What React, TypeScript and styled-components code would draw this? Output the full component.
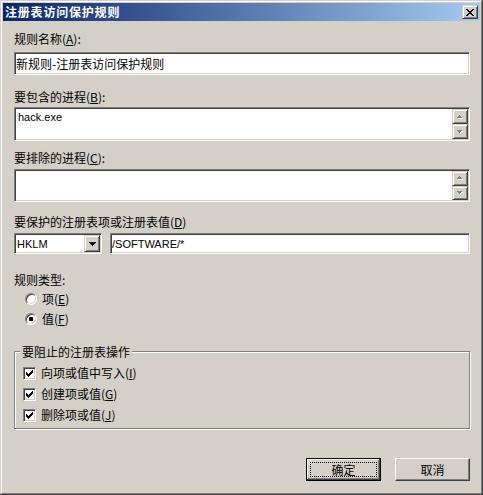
import React from "react";
import styled, { createGlobalStyle, css } from "styled-components";

const FACE = "#d4d0c8";

const GlobalStyle = createGlobalStyle`
  html, body { margin: 0; padding: 0; background: ${FACE}; }
  body {
    font-family: "Noto Sans CJK SC", "Liberation Sans", sans-serif;
    font-size: 12px;
    color: #000;
  }
  * { box-sizing: border-box; }
`;

const sunken = css`
  background: #fff;
  border: 1px solid;
  border-color: #808080 #fff #fff #808080;
  box-shadow: inset 1px 1px 0 #404040, inset -1px -1px 0 ${FACE};
`;

const raisedSmall = css`
  background: ${FACE};
  border: 1px solid;
  border-color: ${FACE} #404040 #404040 ${FACE};
  box-shadow: inset 1px 1px 0 #fff, inset -1px -1px 0 #808080;
`;

const Window = styled.div`
  width: 483px;
  height: 495px;
  padding: 3px;
  background: ${FACE};
  display: flex;
  flex-direction: column;
  box-shadow: inset -1px -1px 0 #404040, inset 1px 1px 0 ${FACE},
    inset -2px -2px 0 #808080, inset 2px 2px 0 #fff;
`;

const TitleBar = styled.div`
  height: 18px;
  flex: none;
  display: flex;
  align-items: center;
  padding: 0 2px;
  background: linear-gradient(to right, #0a246a, #a6caf0);
`;

const Title = styled.span`
  color: #fff;
  font-weight: bold;
  font-size: 12px;
  line-height: 18px;
  letter-spacing: 0.8px;
`;

const CloseButton = styled.div`
  ${raisedSmall};
  margin-left: auto;
  width: 16px;
  height: 14px;
  display: flex;
  align-items: center;
  justify-content: center;
`;

const Content = styled.div`
  flex: 1;
  display: flex;
  flex-direction: column;
  padding: 10px 10px 11px 11px;
`;

const Label = styled.div<{ $mt?: number; $mb?: number }>`
  flex: none;
  height: 16px;
  line-height: 16px;
  white-space: nowrap;
  margin-top: ${(p) => p.$mt ?? 0}px;
  margin-bottom: ${(p) => p.$mb ?? 0}px;
`;

const Key = styled.span`
  text-decoration: underline;
  text-underline-offset: 1px;
`;

const TextField = styled.div<{ $latin?: boolean; $pad?: number; $h: number; $grow?: boolean }>`
  ${sunken};
  height: ${(p) => p.$h}px;
  flex: ${(p) => (p.$grow ? "1 1 auto" : "none")};
  display: flex;
  align-items: center;
  padding-left: ${(p) => p.$pad ?? 1}px;
  white-space: nowrap;
  overflow: hidden;
  ${(p) =>
    p.$latin &&
    css`
      font-family: "Liberation Sans", sans-serif;
      font-size: 11px;
    `}
`;

const ListField = styled.div<{ $h: number }>`
  ${sunken};
  flex: none;
  height: ${(p) => p.$h}px;
  display: flex;
  padding: 1px;
`;

const ListText = styled.div`
  flex: 1;
  padding: 1px 0 0 2px;
  font-family: "Liberation Sans", sans-serif;
  font-size: 11px;
  line-height: 14px;
`;

const ScrollBar = styled.div`
  width: 16px;
  display: flex;
  flex-direction: column;
`;

const ScrollButton = styled.div`
  ${raisedSmall};
  flex: 1;
  display: flex;
  align-items: center;
  justify-content: center;
`;

const Row = styled.div`
  flex: none;
  display: flex;
  gap: 8px;
  height: 21px;
`;

const Combo = styled.div`
  ${sunken};
  width: 88px;
  height: 21px;
  display: flex;
  align-items: center;
  padding: 1px 1px 1px 2px;
  font-family: "Liberation Sans", sans-serif;
  font-size: 11px;
`;

const ComboText = styled.span`
  flex: 1;
`;

const ComboButton = styled.div`
  ${raisedSmall};
  width: 16px;
  height: 17px;
  display: flex;
  align-items: center;
  justify-content: center;
`;

const OptionList = styled.div<{ $mt: number; $gap: number }>`
  flex: none;
  display: flex;
  flex-direction: column;
  margin-top: ${(p) => p.$mt}px;
  gap: ${(p) => p.$gap}px;
`;

const OptionRow = styled.div<{ $indent: number }>`
  display: flex;
  align-items: center;
  height: 16px;
  line-height: 16px;
  padding-left: ${(p) => p.$indent}px;
  gap: 5px;
  white-space: nowrap;
`;

const Radio = styled.span`
  width: 12px;
  height: 12px;
  border-radius: 50%;
  background: #fff;
  border: 1px solid;
  border-color: #808080 #fff #fff #808080;
  box-shadow: inset 1px 1px 0 #404040, inset -1px -1px 0 ${FACE};
  display: flex;
  align-items: center;
  justify-content: center;
`;

const RadioDot = styled.span`
  width: 4px;
  height: 4px;
  border-radius: 1px;
  background: #000;
`;

const CheckBox = styled.span`
  ${sunken};
  width: 13px;
  height: 13px;
  flex: none;
  display: flex;
  align-items: center;
  justify-content: center;
`;

const GroupBox = styled.div`
  flex: none;
  position: relative;
  margin-top: 24px;
  height: 78px;
  border: 1px solid #808080;
  box-shadow: inset 1px 1px 0 #fff, 1px 1px 0 #fff;
  padding: 13px 0 0 8px;
`;

const Legend = styled.span`
  position: absolute;
  top: -8px;
  left: 5px;
  padding: 0 2px;
  height: 16px;
  line-height: 16px;
  background: ${FACE};
  white-space: nowrap;
`;

const ButtonRow = styled.div`
  margin-top: auto;
  display: flex;
  justify-content: flex-end;
  gap: 14px;
`;

const Button = styled.div<{ $default?: boolean }>`
  position: relative;
  width: 75px;
  height: 23px;
  display: flex;
  align-items: center;
  justify-content: center;
  background: ${FACE};
  line-height: 16px;
  ${(p) =>
    p.$default
      ? css`
          border: 1px solid #000;
          box-shadow: inset -1px -1px 0 #404040, inset 1px 1px 0 #fff,
            inset -2px -2px 0 #808080;
          &::after {
            content: "";
            position: absolute;
            inset: 3px;
            border: 1px dotted #000;
          }
        `
      : css`
          border: 1px solid;
          border-color: #fff #404040 #404040 #fff;
          box-shadow: inset -1px -1px 0 #808080;
        `}
`;

type PixelProps = { rows: string[]; color: string; shadow?: string };

const PixelIcon = ({ rows, color, shadow }: PixelProps) => {
  const w = rows[0].length + (shadow ? 1 : 0);
  const h = rows.length + (shadow ? 1 : 0);
  const cells: React.ReactNode[] = [];
  const draw = (dx: number, fill: string, key: string) =>
    rows.forEach((r, y) =>
      r.split("").forEach((c, x) => {
        if (c === "X")
          cells.push(
            <rect key={`${key}${x}-${y}`} x={x + dx} y={y + dx} width={1} height={1} fill={fill} />
          );
      })
    );
  if (shadow) draw(1, shadow, "s");
  draw(0, color, "m");
  return (
    <svg width={w} height={h} shapeRendering="crispEdges" style={{ display: "block" }}>
      {cells}
    </svg>
  );
};

const CLOSE = ["XX....XX", ".XX..XX.", "..XXXX..", "...XX...", "..XXXX..", ".XX..XX.", "XX....XX"];
const CHECK = ["......X", ".....XX", "X...XXX", "XX.XXX.", "XXXXX..", ".XXX...", "..X...."];
const DOWN_BIG = ["XXXXXXX", ".XXXXX.", "..XXX..", "...X..."];
const UP_SMALL = ["..X..", ".XXX.", "XXXXX"];
const DOWN_SMALL = ["XXXXX", ".XXX.", "..X.."];

const Scroll = () => (
  <ScrollBar>
    <ScrollButton>
      <PixelIcon rows={UP_SMALL} color="#808080" shadow="#fff" />
    </ScrollButton>
    <ScrollButton>
      <PixelIcon rows={DOWN_SMALL} color="#808080" shadow="#fff" />
    </ScrollButton>
  </ScrollBar>
);

const Check = () => (
  <CheckBox>
    <PixelIcon rows={CHECK} color="#000" />
  </CheckBox>
);

export default function App() {
  return (
    <>
      <GlobalStyle />
      <Window>
        <TitleBar>
          <Title>注册表访问保护规则</Title>
          <CloseButton>
            <PixelIcon rows={CLOSE} color="#000" />
          </CloseButton>
        </TitleBar>
        <Content>
          <Label $mb={5}>
            规则名称(<Key>A</Key>):
          </Label>
          <TextField $h={23} $pad={1}>
            新规则-注册表访问保护规则
          </TextField>

          <Label $mt={14} $mb={2}>
            要包含的进程(<Key>B</Key>):
          </Label>
          <ListField $h={34}>
            <ListText>hack.exe</ListText>
            <Scroll />
          </ListField>

          <Label $mt={9} $mb={3}>
            要排除的进程(<Key>C</Key>):
          </Label>
          <ListField $h={33}>
            <ListText />
            <Scroll />
          </ListField>

          <Label $mt={12} $mb={3}>
            要保护的注册表项或注册表值(<Key>D</Key>)
          </Label>
          <Row>
            <Combo>
              <ComboText>HKLM</ComboText>
              <ComboButton>
                <PixelIcon rows={DOWN_BIG} color="#000" />
              </ComboButton>
            </Combo>
            <TextField $h={21} $grow $latin $pad={1}>
              /SOFTWARE/*
            </TextField>
          </Row>

          <Label $mt={18}>规则类型:</Label>
          <OptionList $mt={3} $gap={4}>
            <OptionRow $indent={11}>
              <Radio />
              <span>
                项(<Key>E</Key>)
              </span>
            </OptionRow>
            <OptionRow $indent={11}>
              <Radio>
                <RadioDot />
              </Radio>
              <span>
                值(<Key>F</Key>)
              </span>
            </OptionRow>
          </OptionList>

          <GroupBox>
            <Legend>要阻止的注册表操作</Legend>
            <OptionList $mt={0} $gap={5}>
              <OptionRow $indent={0}>
                <Check />
                <span>
                  向项或值中写入(<Key>I</Key>)
                </span>
              </OptionRow>
              <OptionRow $indent={0}>
                <Check />
                <span>
                  创建项或值(<Key>G</Key>)
                </span>
              </OptionRow>
              <OptionRow $indent={0}>
                <Check />
                <span>
                  删除项或值(<Key>J</Key>)
                </span>
              </OptionRow>
            </OptionList>
          </GroupBox>

          <ButtonRow>
            <Button $default>确定</Button>
            <Button>取消</Button>
          </ButtonRow>
        </Content>
      </Window>
    </>
  );
}
